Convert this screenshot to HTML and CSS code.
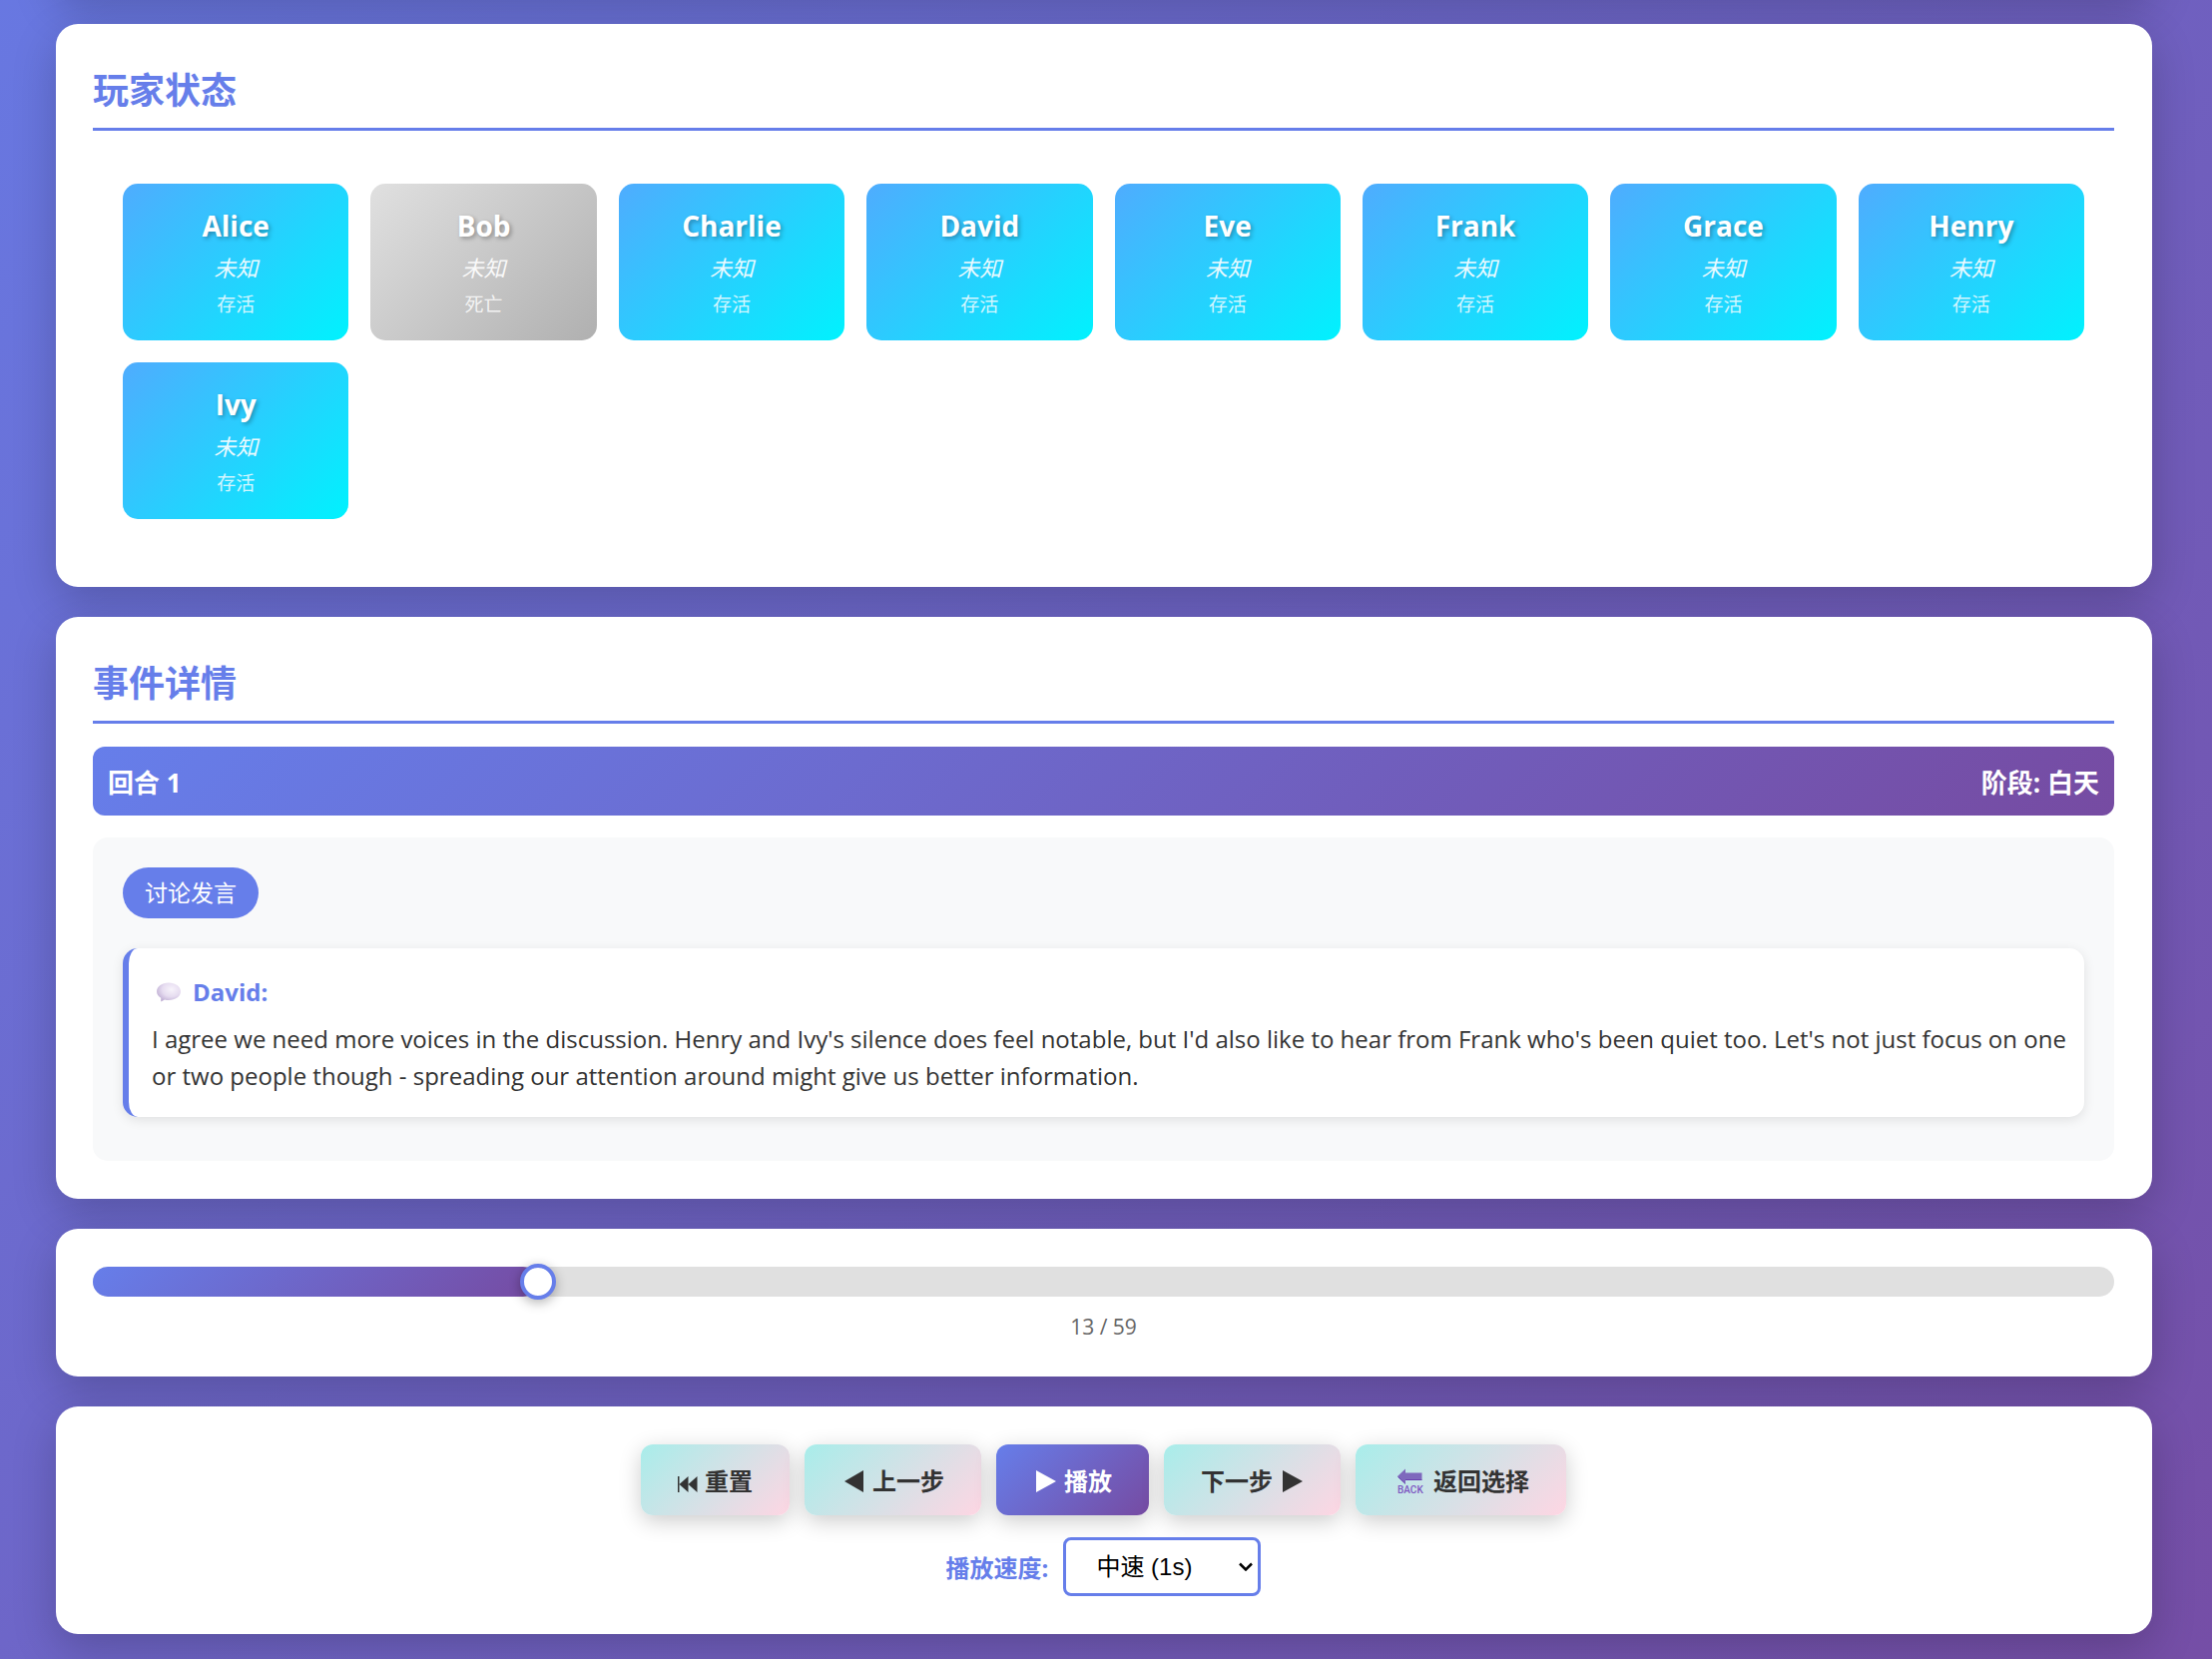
FILE: index.html
```html
<!DOCTYPE html>
<html lang="zh-CN">
<head>
<meta charset="utf-8">
<meta name="viewport" content="width=device-width, initial-scale=1">
<title>游戏回放</title>
<link rel="stylesheet" href="styles.css">
</head>
<body>
<main class="page">
  <div class="panel panel-top"></div>

  <section class="panel">
    <h2 class="panel-title">玩家状态</h2>
    <div class="players">
      <article class="player"><h3 class="player-name">Alice</h3><p class="player-role">未知</p><p class="player-state">存活</p></article>
      <article class="player dead"><h3 class="player-name">Bob</h3><p class="player-role">未知</p><p class="player-state">死亡</p></article>
      <article class="player"><h3 class="player-name">Charlie</h3><p class="player-role">未知</p><p class="player-state">存活</p></article>
      <article class="player"><h3 class="player-name">David</h3><p class="player-role">未知</p><p class="player-state">存活</p></article>
      <article class="player"><h3 class="player-name">Eve</h3><p class="player-role">未知</p><p class="player-state">存活</p></article>
      <article class="player"><h3 class="player-name">Frank</h3><p class="player-role">未知</p><p class="player-state">存活</p></article>
      <article class="player"><h3 class="player-name">Grace</h3><p class="player-role">未知</p><p class="player-state">存活</p></article>
      <article class="player"><h3 class="player-name">Henry</h3><p class="player-role">未知</p><p class="player-state">存活</p></article>
      <article class="player"><h3 class="player-name">Ivy</h3><p class="player-role">未知</p><p class="player-state">存活</p></article>
    </div>
  </section>

  <section class="panel">
    <h2 class="panel-title">事件详情</h2>
    <div class="round-bar"><span>回合 1</span><span>阶段: 白天</span></div>
    <div class="event">
      <span class="event-tag">讨论发言</span>
      <article class="message">
        <h3 class="speaker">
          <svg class="bubble" viewBox="0 0 24 20" aria-hidden="true">
            <defs>
              <radialGradient id="bubble-fill" cx="0.62" cy="0.35" r="0.7">
                <stop offset="0" stop-color="#f7f3fb"/>
                <stop offset="0.55" stop-color="#e6dcf0"/>
                <stop offset="1" stop-color="#bfaed3"/>
              </radialGradient>
            </defs>
            <path d="M12 0.500C5.500 0.500 0 4.300 0 9.200c0 3 1.700 5 4.200 6.600L4.200 19.500l3.800-2c1.300.4 2.600.5 4 .5 6.500 0 12-3.900 12-8.800S18.500.5 12 .5z" fill="url(#bubble-fill)"/>
          </svg>
          David:
        </h3>
        <p class="speech">I agree we need more voices in the discussion. Henry and Ivy's silence does feel notable, but I'd also like to hear from Frank who's been quiet too. Let's not just focus on one or two people though - spreading our attention around might give us better information.</p>
      </article>
    </div>
  </section>

  <section class="panel">
    <div class="progress">
      <div class="progress-fill" style="width: 22.03%"></div>
      <input class="progress-input" type="range" min="0" max="59" value="13" aria-label="回放进度">
    </div>
    <p class="progress-text">13 / 59</p>
  </section>

  <section class="panel">
    <div class="controls">
      <button class="btn" type="button">
        <svg class="icon-reset" viewBox="0 -6 20 22" aria-hidden="true"><path d="M0 0h1.500v16H0zM10.500 0v16L1.500 8zM19.500 0v16L10.500 8z"/></svg>重置
      </button>
      <button class="btn" type="button">
        <svg class="icon-tri" viewBox="0 0 24 22" aria-hidden="true"><path d="M22 0v22L3 11z"/></svg>上一步
      </button>
      <button class="btn btn-primary" type="button">
        <svg class="icon-tri" viewBox="0 0 24 22" aria-hidden="true"><path d="M3 0v22l20-11z"/></svg>播放
      </button>
      <button class="btn" type="button">
        下一步<svg class="icon-tri" viewBox="0 0 24 22" aria-hidden="true"><path d="M3 0v22l20-11z"/></svg>
      </button>
      <button class="btn" type="button">
        <svg class="icon-back" viewBox="0 0 34 26" aria-hidden="true">
          <path d="M5 8l8-7.500v4h16.500v7H13v4z" fill="#7e69bd"/>
          <path d="M13 11.500h16.500M5.500 8.500l7.500 7" fill="none" stroke="#6a3fb0" stroke-width="1"/>
          <text x="5" y="25" class="back-text">BACK</text>
        </svg>返回选择
      </button>
    </div>
    <div class="speed">
      <label class="speed-label" for="speed">播放速度:</label>
      <span class="speed-box">
        <select class="speed-select" id="speed">
          <option>慢速 (2s)</option>
          <option selected>中速 (1s)</option>
          <option>快速 (0.5s)</option>
        </select>
        <svg class="chevron" viewBox="0 0 14 9" aria-hidden="true"><path d="M1 1.500l6 6 6-6" fill="none" stroke="#000" stroke-width="2.500"/></svg>
      </span>
    </div>
  </section>
</main>
</body>
</html>
```
FILE: styles.css
```css
* {
  box-sizing: border-box;
  margin: 0;
  padding: 0;
}

html {
  overflow: hidden;
}

body {
  min-height: 100vh;
  font-family: "Open Sans", "Noto Sans CJK SC", sans-serif;
  font-size: 24px;
  color: #333;
  background: linear-gradient(135deg, #667eea -15%, #764ba2 107%) no-repeat;
}

.page {
  display: flex;
  flex-direction: column;
  gap: 30px;
  padding: 0 60px 25px 56px;
}

.panel {
  padding: 38px 38px 38px 37px;
  background: #fff;
  border-radius: 22px;
  box-shadow: 0 15px 45px rgba(0, 0, 0, 0.2);
}

/* the panel scrolled out above the first visible one */
.panel-top {
  height: 200px;
  margin-top: -206px;
}

.panel-title {
  margin-bottom: 23px;
  padding-bottom: 9px;
  border-bottom: 3px solid #667eea;
  font-size: 36px;
  line-height: 57px;
  color: #667eea;
}

.players {
  display: grid;
  grid-template-columns: repeat(auto-fill, minmax(200px, 1fr));
  gap: 22px;
  padding: 30px;
}

.player {
  padding: 22px;
  border-radius: 15px;
  background: linear-gradient(135deg, #4facfe 0%, #00f2fe 100%);
  color: #fff;
  text-align: center;
}

.player.dead {
  background: linear-gradient(135deg, #e0e0e0 0%, #b0b0b0 100%);
}

.player-name {
  margin-bottom: 6px;
  font-size: 28px;
  line-height: 41px;
  text-shadow: 2px 2px 4px rgba(0, 0, 0, 0.3);
}

.player-role {
  margin-bottom: 8px;
  font-size: 22px;
  font-style: italic;
  line-height: 30px;
  opacity: 0.9;
}

.player-state {
  font-size: 19px;
  line-height: 28px;
  opacity: 0.8;
}

.round-bar {
  display: flex;
  justify-content: space-between;
  margin-bottom: 22px;
  padding: 17px 15px 13px;
  border-radius: 12px;
  background: linear-gradient(135deg, #667eea 0%, #764ba2 100%);
  color: #fff;
  font-size: 26px;
  font-weight: bold;
  line-height: 39px;
}

.event {
  padding: 30px 30px 44px;
  border-radius: 15px;
  background: #f8f9fa;
}

.event-tag {
  display: block;
  width: fit-content;
  margin-bottom: 30px;
  padding: 9px 22px;
  border-radius: 30px;
  background: #667eea;
  color: #fff;
  font-size: 23px;
  line-height: 33px;
}

.message {
  padding: 22px 12px 23px 23px;
  border-left: 6px solid #667eea;
  border-radius: 15px;
  background: #fff;
  box-shadow: 0 3px 12px rgba(0, 0, 0, 0.1);
}

.speaker {
  display: flex;
  align-items: center;
  gap: 12px;
  margin-bottom: 7px;
  padding-left: 5px;
  font-size: 24px;
  line-height: 43px;
  color: #667eea;
}

.bubble {
  width: 24px;
  height: 20px;
}

.speech {
  font-size: 24px;
  line-height: 37px;
}

.progress {
  position: relative;
  height: 30px;
  margin-bottom: 18px;
  border-radius: 15px;
  background: #e0e0e0;
}

.progress-fill {
  height: 100%;
  border-radius: 15px;
  background: linear-gradient(135deg, #667eea 0%, #764ba2 100%);
}

/* wider than the track by one thumb, so the thumb centre meets the fill's end */
.progress-input {
  position: absolute;
  top: -3px;
  left: -18px;
  width: calc(100% + 36px);
  height: 36px;
  appearance: none;
  background: transparent;
}

.progress-input::-webkit-slider-thumb {
  appearance: none;
  width: 36px;
  height: 36px;
  border: 4px solid #667eea;
  border-radius: 50%;
  background: #fff;
  box-shadow: 0 3px 12px rgba(0, 0, 0, 0.3);
}

.progress-text {
  font-size: 21px;
  line-height: 24px;
  color: #666;
  text-align: center;
}

.controls {
  display: flex;
  flex-wrap: wrap;
  justify-content: center;
  gap: 15px;
  margin-bottom: 22px;
}

.btn {
  display: flex;
  align-items: center;
  gap: 7px;
  padding: 2px 37px 0;
  border: 0;
  border-radius: 12px;
  background: linear-gradient(135deg, #a8edea 0%, #fed6e3 100%);
  box-shadow: 0 6px 22px rgba(0, 0, 0, 0.2);
  color: #333;
  font: bold 24px/69px "Open Sans", "Noto Sans CJK SC", sans-serif;
}

.btn-primary {
  background: linear-gradient(135deg, #667eea 0%, #764ba2 100%);
  color: #fff;
}

.btn svg {
  fill: currentColor;
}

.icon-reset {
  width: 20px;
  height: 22px;
}

.icon-tri {
  width: 24px;
  height: 22px;
}

.icon-back {
  width: 34px;
  height: 26px;
}

.back-text {
  fill: #7e57c2;
  font: 500 10px Roboto, sans-serif;
}

.speed {
  display: flex;
  justify-content: center;
  align-items: center;
  gap: 15px;
}

.speed-label {
  font-weight: bold;
  color: #667eea;
}

.speed-box {
  position: relative;
}

.speed-select {
  display: block;
  width: 198px;
  height: 59px;
  padding: 0 30px;
  appearance: none;
  border: 3px solid #667eea;
  border-radius: 8px;
  background: #fff;
  color: #000;
  font: 24px "Liberation Sans", "Noto Sans CJK SC", sans-serif;
}

.chevron {
  position: absolute;
  top: 25px;
  right: 8px;
  width: 14px;
  height: 9px;
  pointer-events: none;
}
```
